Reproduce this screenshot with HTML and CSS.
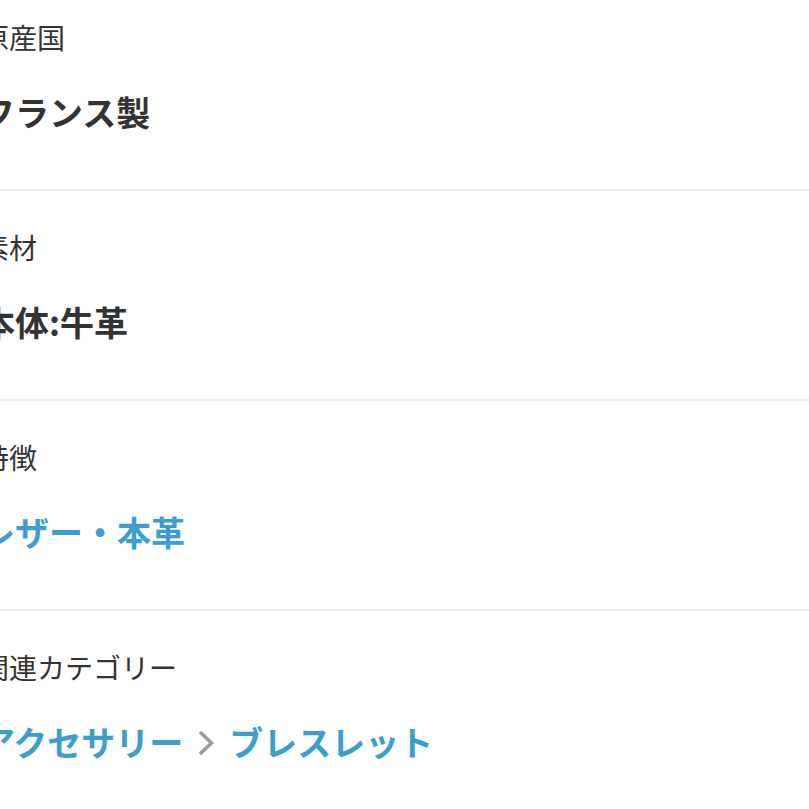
FILE: index.html
```html
<!DOCTYPE html>
<html lang="ja">
<head>
<meta charset="utf-8">
<link rel="stylesheet" href="styles.css">
</head>
<body>
<div class="spec-list">
  <section class="spec">
    <div class="spec-label">原産国</div>
    <div class="spec-value">フランス製</div>
  </section>
  <section class="spec">
    <div class="spec-label">素材</div>
    <div class="spec-value">本体:牛革</div>
  </section>
  <section class="spec">
    <div class="spec-label">特徴</div>
    <div class="spec-value"><a class="link">レザー・本革</a></div>
  </section>
  <section class="spec">
    <div class="spec-label">関連カテゴリー</div>
    <div class="spec-value crumbs">
      <a class="link">アクセサリー</a>
      <svg class="chev" width="16" height="26" viewBox="0 0 16 26"><path d="M2 2 L13.5 13 L2 24" fill="none" stroke="#9a9a9a" stroke-width="3.6" stroke-linejoin="miter"/></svg>
      <a class="link">ブレスレット</a>
    </div>
  </section>
</div>
</body>
</html>
```

FILE: styles.css
```css
html, body {
  margin: 0;
  padding: 0;
  background: #fff;
}
body {
  font-family: "Noto Sans CJK JP", "Noto Sans", sans-serif;
  color: #333;
  overflow: hidden;
}
.spec-list {
  margin-top: -19px;
  margin-left: -19px;
}
.spec {
  padding: 36px 0 52px;
  border-bottom: 2px solid #efefef;
}
.spec:last-child {
  border-bottom: none;
}
.spec-label {
  font-size: 28px;
  line-height: 40px;
  font-weight: 400;
  color: #333;
}
.spec-value {
  margin-top: 30px;
  font-size: 34px;
  line-height: 50px;
  font-weight: 700;
  color: #333;
}
.link {
  color: #3a9fd0;
}
.crumbs {
  display: flex;
  align-items: center;
  gap: 15px;
}
.chev {
  display: block;
  margin-top: 2px;
}
```
